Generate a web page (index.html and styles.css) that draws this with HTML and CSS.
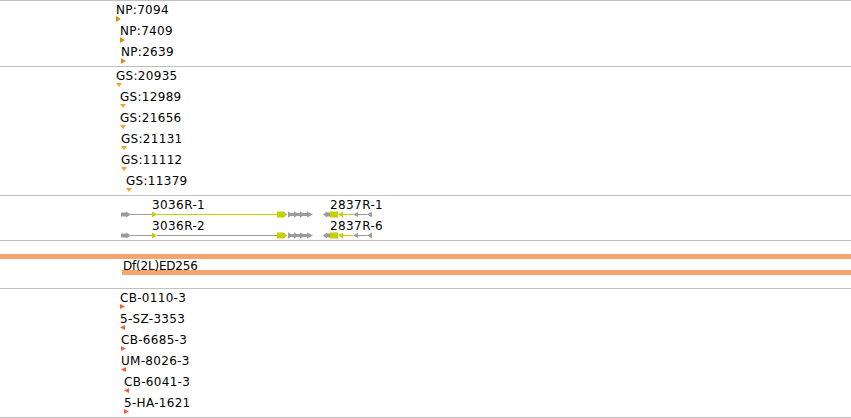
FILE: index.html
```html
<!DOCTYPE html>
<html>
<head>
<meta charset="utf-8">
<title>Tracks</title>
<link rel="stylesheet" href="styles.css">
</head>
<body>
<div class="tracks">
  <section class="track track-np">
    <div class="feat" style="margin-left:116px"><span class="lbl">NP:7094</span><svg class="mk" viewBox="0 0 5 6"><polygon points="0,0 5,3 0,6"/></svg></div>
    <div class="feat" style="margin-left:120px"><span class="lbl">NP:7409</span><svg class="mk" viewBox="0 0 5 6"><polygon points="0,0 5,3 0,6"/></svg></div>
    <div class="feat" style="margin-left:121px"><span class="lbl">NP:2639</span><svg class="mk" viewBox="0 0 5 6"><polygon points="0,0 5,3 0,6"/></svg></div>
  </section>

  <section class="track track-gs">
    <div class="feat" style="margin-left:116px"><span class="lbl">GS:20935</span><svg class="mk" viewBox="0 0 6 4"><polygon points="0,0 6,0 3,4"/></svg></div>
    <div class="feat" style="margin-left:120px"><span class="lbl">GS:12989</span><svg class="mk" viewBox="0 0 6 4"><polygon points="0,0 6,0 3,4"/></svg></div>
    <div class="feat" style="margin-left:120px"><span class="lbl">GS:21656</span><svg class="mk" viewBox="0 0 6 4"><polygon points="0,0 6,0 3,4"/></svg></div>
    <div class="feat" style="margin-left:121px"><span class="lbl">GS:21131</span><svg class="mk" viewBox="0 0 6 4"><polygon points="0,0 6,0 3,4"/></svg></div>
    <div class="feat" style="margin-left:121px"><span class="lbl">GS:11112</span><svg class="mk" viewBox="0 0 6 4"><polygon points="0,0 6,0 3,4"/></svg></div>
    <div class="feat" style="margin-left:126px"><span class="lbl">GS:11379</span><svg class="mk" viewBox="0 0 6 4"><polygon points="0,0 6,0 3,4"/></svg></div>
  </section>

  <section class="track track-genes">
    <div class="generow">
      <div class="glabels">
        <span class="glbl" style="left:152px">3036R-1</span>
        <span class="glbl" style="left:330px">2837R-1</span>
      </div>
      <svg class="gene" viewBox="0 0 851 7">
        <g class="utr">
          <rect x="121" y="1.5" width="5" height="4"/>
          <polygon points="126,0.5 131,3.5 126,6.5"/>
          <rect x="131" y="3" width="21" height="1"/>
          <rect x="288" y="2" width="20" height="3"/>
          <polygon points="288,0.5 294,3.5 288,6.5"/>
          <polygon points="294,0.5 300,3.5 294,6.5"/>
          <polygon points="300,0.5 306,3.5 300,6.5"/>
          <polygon points="307,0.5 313,3.5 307,6.5"/>
          <polygon points="323,3.5 327,0.5 327,6.5"/>
          <rect x="327" y="1.5" width="3" height="4"/>
          <polygon points="353,3.5 358,1 358,6"/>
          <rect x="358" y="3" width="9" height="1"/>
          <polygon points="367,3.5 372,0.5 372,6.5"/>
        </g>
        <g class="cds">
          <polygon points="152,0.5 157,3.5 152,6.5"/>
          <rect x="157" y="3" width="120" height="1"/>
          <polygon points="277,0.5 284,0.5 287,3.5 284,6.5 277,6.5"/>
          <rect x="330" y="0.5" width="8" height="6"/>
          <polygon points="338,3.5 343,0.5 343,6.5"/>
          <rect x="343" y="3" width="10" height="1"/>
        </g>
      </svg>
    </div>
    <div class="generow">
      <div class="glabels">
        <span class="glbl" style="left:152px">3036R-2</span>
        <span class="glbl" style="left:330px">2837R-6</span>
      </div>
      <svg class="gene" viewBox="0 0 851 7">
        <g class="utr">
          <rect x="121" y="1.5" width="5" height="4"/>
          <polygon points="126,0.5 131,3.5 126,6.5"/>
          <rect x="131" y="3" width="21" height="1"/>
          <rect x="157" y="3" width="120" height="1"/>
          <rect x="288" y="2" width="20" height="3"/>
          <polygon points="288,0.5 294,3.5 288,6.5"/>
          <polygon points="294,0.5 300,3.5 294,6.5"/>
          <polygon points="300,0.5 306,3.5 300,6.5"/>
          <polygon points="307,0.5 313,3.5 307,6.5"/>
          <polygon points="323,3.5 327,0.5 327,6.5"/>
          <rect x="327" y="1.5" width="3" height="4"/>
          <polygon points="353,3.5 358,1 358,6"/>
          <rect x="358" y="3" width="9" height="1"/>
          <polygon points="367,3.5 372,0.5 372,6.5"/>
        </g>
        <g class="cds">
          <polygon points="152,0.5 157,3.5 152,6.5"/>
          <polygon points="277,0.5 284,0.5 287,3.5 284,6.5 277,6.5"/>
          <rect x="330" y="0.5" width="8" height="6"/>
          <polygon points="338,3.5 343,0.5 343,6.5"/>
          <rect x="343" y="3" width="10" height="1"/>
        </g>
      </svg>
    </div>
  </section>

  <section class="track track-df">
    <div class="dfbar dfbar-full"></div>
    <div class="dffeat" style="margin-left:122px">
      <span class="lbl dflbl">Df(2L)ED256</span>
      <div class="dfbar"></div>
    </div>
  </section>

  <section class="track track-cb">
    <div class="feat" style="margin-left:120px"><span class="lbl">CB-0110-3</span><svg class="mk" viewBox="0 0 5 5"><polygon points="0,0 5,2.5 0,5"/></svg></div>
    <div class="feat" style="margin-left:120px"><span class="lbl">5-SZ-3353</span><svg class="mk" viewBox="0 0 5 5"><polygon points="5,0 0,2.5 5,5"/></svg></div>
    <div class="feat" style="margin-left:121px"><span class="lbl">CB-6685-3</span><svg class="mk" viewBox="0 0 5 5"><polygon points="0,0 5,2.5 0,5"/></svg></div>
    <div class="feat" style="margin-left:121px"><span class="lbl">UM-8026-3</span><svg class="mk" viewBox="0 0 5 5"><polygon points="5,0 0,2.5 5,5"/></svg></div>
    <div class="feat" style="margin-left:124px"><span class="lbl">CB-6041-3</span><svg class="mk" viewBox="0 0 5 5"><polygon points="5,0 0,2.5 5,5"/></svg></div>
    <div class="feat" style="margin-left:124px"><span class="lbl">5-HA-1621</span><svg class="mk" viewBox="0 0 5 5"><polygon points="0,0 5,2.5 0,5"/></svg></div>
  </section>
</div>
</body>
</html>
```

FILE: styles.css
```css
* {
  box-sizing: border-box;
}

html,
body {
  margin: 0;
  padding: 0;
  background: #ffffff;
}

body {
  width: 851px;
  height: 418px;
  overflow: hidden;
  font-family: "DejaVu Sans", "Bitstream Vera Sans", sans-serif;
  font-size: 12px;
  color: #000000;
}

.tracks {
  display: flex;
  flex-direction: column;
  width: 851px;
}

.track {
  border-top: 1px solid #c0c0c0;
  padding-top: 1px;
}

.track:last-child {
  border-bottom: 1px solid #c0c0c0;
}

.track-np { height: 66px; }
.track-gs { height: 129px; }
.track-genes { height: 45px; }
.track-df { height: 48px; padding-top: 13px; }
.track-cb { height: 130px; }

.feat {
  height: 21px;
}

.lbl {
  display: block;
  height: 12px;
  padding-top: 2px;
  line-height: 12px;
  white-space: nowrap;
  letter-spacing: 0.3px;
}

.mk {
  display: block;
}

.track-np .mk {
  margin-top: 2px;
  width: 5px;
  height: 6px;
  fill: #d4920e;
}

.track-gs .mk {
  margin-top: 3px;
  width: 6px;
  height: 4px;
  fill: #f0a52a;
}

.track-cb .mk {
  margin-top: 2px;
  width: 5px;
  height: 5px;
  fill: #f2603c;
}

/* gene track */
.generow {
  height: 21px;
}

.glabels {
  position: relative;
  height: 12px;
}

.glbl {
  position: absolute;
  top: 2px;
  line-height: 12px;
  white-space: nowrap;
  letter-spacing: 0.4px;
}

.gene {
  display: block;
  width: 851px;
  height: 7px;
  margin-top: 2px;
}

.gene .utr {
  fill: #9c9c9c;
}

.gene .cds {
  fill: #c4d000;
}

/* deficiency track */
.dfbar {
  height: 5px;
  background: #f4a46e;
}

.dffeat .dflbl {
  margin-top: -1px;
  padding-left: 1px;
  letter-spacing: -0.2px;
}
```
